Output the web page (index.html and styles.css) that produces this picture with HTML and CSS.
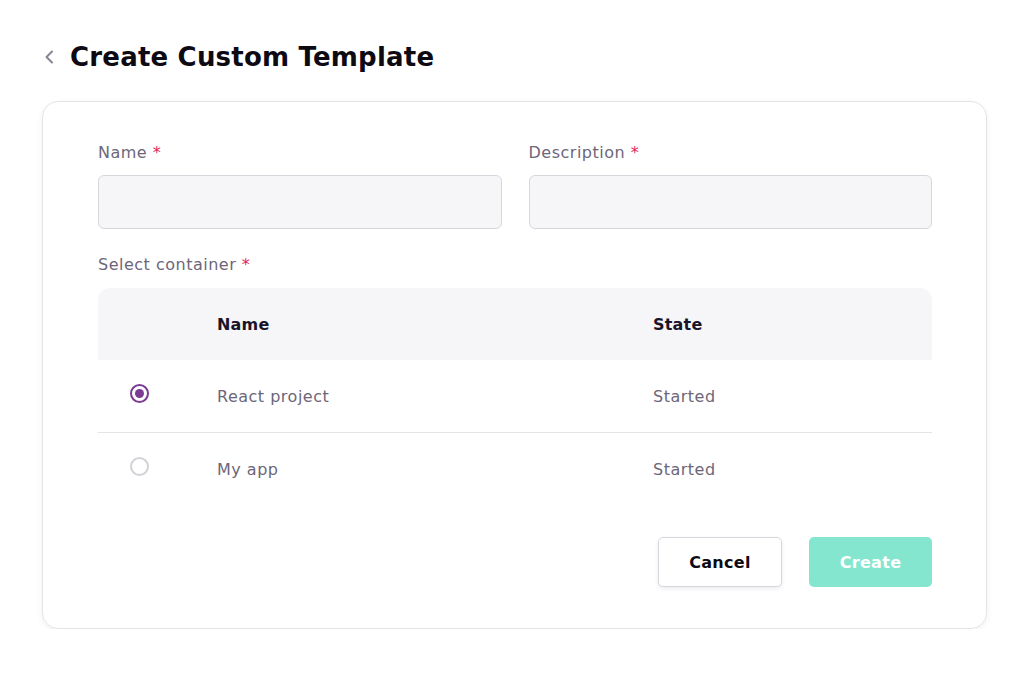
FILE: index.html
```html
<!DOCTYPE html>
<html>
<head>
<meta charset="utf-8">
<link rel="stylesheet" href="styles.css">
</head>
<body>
<div class="page">
  <div class="header">
    <svg class="back" width="14" height="18" viewBox="0 0 14 18"><path d="M10 3.5 L4.5 9 L10 14.5" fill="none" stroke="#8a8294" stroke-width="2" stroke-linecap="round" stroke-linejoin="round"/></svg>
    <h1 class="title">Create Custom Template</h1>
  </div>
  <div class="card">
    <div class="fields">
      <div class="field">
        <label class="label">Name <span class="req">*</span></label>
        <div class="input"></div>
      </div>
      <div class="field">
        <label class="label">Description <span class="req">*</span></label>
        <div class="input"></div>
      </div>
    </div>
    <div class="label sel-label">Select container <span class="req">*</span></div>
    <div class="table">
      <div class="row head">
        <div class="c-radio"></div>
        <div class="c-name">Name</div>
        <div class="c-state">State</div>
      </div>
      <div class="row body-row divided">
        <div class="c-radio"><span class="radio checked"></span></div>
        <div class="c-name">React project</div>
        <div class="c-state">Started</div>
      </div>
      <div class="row body-row">
        <div class="c-radio"><span class="radio"></span></div>
        <div class="c-name">My app</div>
        <div class="c-state">Started</div>
      </div>
    </div>
    <div class="actions">
      <button class="btn cancel">Cancel</button>
      <button class="btn create">Create</button>
    </div>
  </div>
</div>
</body>
</html>
```
FILE: styles.css
```css
* { box-sizing: border-box; }
body {
  margin: 0;
  background: #fff;
  font-family: "DejaVu Sans", "Open Sans", sans-serif;
  color: #1a1429;
}
.page {
  padding: 37px 49px 0 42px;
}
.header {
  display: flex;
  align-items: center;
  gap: 14px;
  height: 40px;
}
.title {
  margin: 0;
  font-size: 26px;
  font-weight: 700;
  letter-spacing: 0.2px;
  color: #0d0a14;
}
.card {
  margin-top: 24px;
  width: 945px;
  height: 528px;
  border: 1px solid #e4e3e8;
  border-radius: 16px;
  box-shadow: 0 2px 6px rgba(30, 20, 60, 0.06);
  padding: 41px 54px 0 55px;
}
.fields {
  display: flex;
  gap: 27px;
}
.field { flex: 1; }
.label {
  display: block;
  font-size: 16px;
  letter-spacing: 0.5px;
  color: #6d6679;
  line-height: 20px;
}
.req { color: #e5245a; }
.input {
  margin-top: 12px;
  height: 54px;
  background: #f6f5f8;
  border: 1px solid #d8d6dd;
  border-radius: 6px;
}
.sel-label { margin-top: 26px; }
.table { margin-top: 13px; }
.row {
  display: flex;
  align-items: center;
  font-size: 16px;
  letter-spacing: 0.5px;
}
.head {
  height: 72px;
  background: #f6f5f8;
  border-radius: 12px 12px 0 0;
  font-weight: 700;
  letter-spacing: 0.2px;
  color: #1a1429;
}
.body-row {
  height: 72px;
  color: #6d6679;
}
.divided { border-bottom: 1px solid #e4e3e8; height: 73px; }
.c-radio {
  width: 119px;
  padding-left: 32px;
  display: flex;
  align-items: center;
  margin-top: -6px;
}
.body-row .c-name, .body-row .c-state { margin-top: 0; }
.c-name { width: 436px; }
.c-state { flex: 1; }
.radio {
  width: 19px;
  height: 19px;
  border-radius: 50%;
  border: 2px solid #d4d1d8;
  display: inline-block;
  position: relative;
}
.radio.checked { border-color: #7b3a93; }
.radio.checked::after {
  content: "";
  position: absolute;
  left: 3px; top: 3px;
  width: 9px; height: 9px;
  border-radius: 50%;
  background: #7b3a93;
}
.actions {
  display: flex;
  justify-content: flex-end;
  gap: 27px;
  margin-top: 32px;
}
.btn {
  height: 50px;
  border-radius: 5px;
  font-family: inherit;
  font-size: 16px;
  font-weight: 700;
  letter-spacing: 0.3px;
  cursor: pointer;
}
.cancel {
  width: 124px;
  background: #fff;
  border: 1px solid #d8d6dd;
  color: #0d0a14;
  box-shadow: 0 2px 4px rgba(30, 20, 60, 0.08);
}
.create {
  width: 123px;
  background: #84e6cf;
  border: none;
  color: #fff;
}
```
